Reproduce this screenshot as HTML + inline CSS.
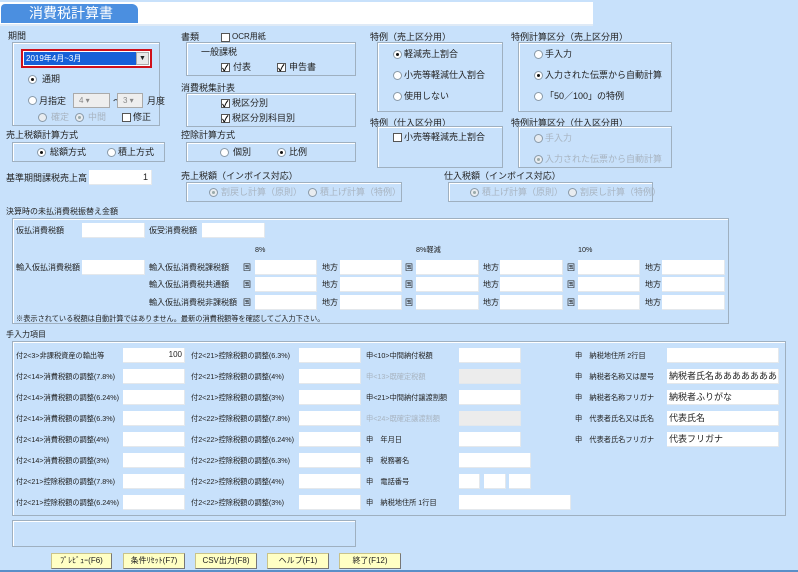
<!DOCTYPE html>
<html><head><meta charset="utf-8"><style>
*{margin:0;padding:0;box-sizing:border-box}
body{width:798px;height:572px;background:#c8e1fb;font-family:"Liberation Sans","Noto Sans CJK JP",sans-serif;font-size:9px;color:#222;position:relative;overflow:hidden}
div,span{position:absolute}
.t{white-space:nowrap;line-height:12px}
.g{color:#a8b4c0}
.bx{border:1px solid #9fb0c0;box-shadow:inset 1px 1px 0 #fff}
.in{background:#fff;height:15px;border-bottom:1px solid #e4e8ec;border-right:1px solid #e4e8ec}
.dis{background:#ececec}
.r{width:9px;height:9px;border-radius:50%;background:#fff;border:1px solid #8a9aa8}
.r.on::after{content:"";position:absolute;left:2px;top:2px;width:3px;height:3px;border-radius:50%;background:#111}
.r.gr{background:#e8ecf0}.r.gr.on::after{background:#9aa}
.c{width:9px;height:9px;background:#fff;border:1px solid #555}
.c.on::after{content:"✓";position:absolute;left:0;top:-3px;font-size:9px;font-weight:bold;color:#000}
.btn{height:16px;background:#ffffc4;border:1px solid #c9c38a;border-right-color:#777;border-bottom-color:#777;text-align:center;font-size:8px;line-height:14px}
.s{font-size:7.2px}
.m{font-size:8px}
</style></head><body>
<div style="left:0;top:2px;width:593px;height:24px;background:#fff;border-bottom:2px solid #dfeaf6"></div>
<div style="left:1px;top:4px;width:137px;height:19px;background:#4b8fe0;border-radius:4px 6px 0 0;color:#fff;font-size:14px;line-height:19px;padding-left:28px">消費税計算書</div>

<div class="t" style="left:8px;top:30px">期間</div>
<div class="bx" style="left:12px;top:42px;width:148px;height:84px"></div>
<div style="left:21px;top:49px;width:131px;height:19px;border:2px solid #d0101a;background:#fff"></div>
<div style="left:24px;top:52px;width:112px;height:13px;background:#1660d8;color:#fff;font-size:8px;line-height:13px;padding-left:2px">2019年4月~3月</div>
<div style="left:136px;top:52px;width:13px;height:13px;background:#e8e8e8;border:1px solid #aaa;font-size:7px;text-align:center;line-height:11px">▼</div>
<div class="r on" style="left:28px;top:75px"></div><div class="t" style="left:42px;top:73px">通期</div>
<div class="r" style="left:28px;top:96px"></div><div class="t" style="left:39px;top:95px">月指定</div>
<div style="left:73px;top:93px;width:37px;height:15px;background:#eee;border:1px solid #aaa;font-size:8px;color:#888;padding-left:5px;line-height:13px">4 ▾</div>
<div class="t" style="left:113px;top:95px">～</div>
<div style="left:117px;top:93px;width:26px;height:15px;background:#eee;border:1px solid #aaa;font-size:8px;color:#888;padding-left:5px;line-height:13px">3 ▾</div>
<div class="t" style="left:147px;top:95px">月度</div>
<div class="r gr" style="left:38px;top:113px"></div><div class="t g" style="left:51px;top:111px">確定</div>
<div class="r gr on" style="left:75px;top:113px"></div><div class="t g" style="left:88px;top:111px">中間</div>
<div class="c" style="left:122px;top:113px"></div><div class="t" style="left:133px;top:111px">修正</div>

<div class="t" style="left:6px;top:129px">売上税額計算方式</div>
<div class="bx" style="left:12px;top:142px;width:153px;height:20px"></div>
<div class="r on" style="left:37px;top:148px"></div><div class="t" style="left:50px;top:146px">総額方式</div>
<div class="r" style="left:107px;top:148px"></div><div class="t" style="left:118px;top:146px">積上方式</div>
<div class="t" style="left:6px;top:172px">基準期間課税売上高</div>
<div class="in" style="left:89px;top:170px;width:63px;text-align:right;padding-right:3px;line-height:15px">1</div>

<div class="t" style="left:181px;top:31px">書類</div>
<div class="c" style="left:221px;top:33px"></div><div class="t m" style="left:232px;top:31px">OCR用紙</div>
<div class="bx" style="left:186px;top:42px;width:170px;height:34px"></div>
<div class="t" style="left:201px;top:46px">一般課税</div>
<div class="c on" style="left:221px;top:63px"></div><div class="t" style="left:233px;top:61px">付表</div>
<div class="c on" style="left:277px;top:63px"></div><div class="t" style="left:289px;top:61px">申告書</div>
<div class="t" style="left:181px;top:82px">消費税集計表</div>
<div class="bx" style="left:186px;top:93px;width:170px;height:34px"></div>
<div class="c on" style="left:221px;top:99px"></div><div class="t" style="left:232px;top:97px">税区分別</div>
<div class="c on" style="left:221px;top:114px"></div><div class="t" style="left:232px;top:112px">税区分別科目別</div>
<div class="t" style="left:181px;top:129px">控除計算方式</div>
<div class="bx" style="left:186px;top:142px;width:170px;height:20px"></div>
<div class="r" style="left:220px;top:148px"></div><div class="t" style="left:233px;top:146px">個別</div>
<div class="r on" style="left:277px;top:148px"></div><div class="t" style="left:289px;top:146px">比例</div>
<div class="t" style="left:181px;top:170px">売上税額（インボイス対応）</div>
<div class="bx" style="left:186px;top:182px;width:216px;height:20px"></div>
<div class="r gr on" style="left:209px;top:188px"></div><div class="t g" style="left:221px;top:186px">割戻し計算（原則）</div>
<div class="r gr" style="left:308px;top:188px"></div><div class="t g" style="left:320px;top:186px">積上げ計算（特例）</div>

<div class="t" style="left:370px;top:31px">特例（売上区分用）</div>
<div class="bx" style="left:377px;top:42px;width:126px;height:70px"></div>
<div class="r on" style="left:393px;top:50px"></div><div class="t" style="left:404px;top:48px">軽減売上割合</div>
<div class="r" style="left:393px;top:71px"></div><div class="t" style="left:404px;top:69px">小売等軽減仕入割合</div>
<div class="r" style="left:393px;top:92px"></div><div class="t" style="left:404px;top:90px">使用しない</div>
<div class="t" style="left:370px;top:117px">特例（仕入区分用）</div>
<div class="bx" style="left:377px;top:126px;width:126px;height:42px"></div>
<div class="c" style="left:393px;top:133px"></div><div class="t" style="left:404px;top:131px">小売等軽減売上割合</div>
<div class="t" style="left:511px;top:31px">特例計算区分（売上区分用）</div>
<div class="bx" style="left:518px;top:42px;width:154px;height:70px"></div>
<div class="r" style="left:534px;top:50px"></div><div class="t" style="left:545px;top:48px">手入力</div>
<div class="r on" style="left:534px;top:71px"></div><div class="t" style="left:545px;top:69px">入力された伝票から自動計算</div>
<div class="r" style="left:534px;top:92px"></div><div class="t" style="left:545px;top:90px">「50／100」の特例</div>
<div class="t" style="left:511px;top:117px">特例計算区分（仕入区分用）</div>
<div class="bx" style="left:518px;top:126px;width:154px;height:42px"></div>
<div class="r gr" style="left:534px;top:134px"></div><div class="t g" style="left:545px;top:132px">手入力</div>
<div class="r gr on" style="left:534px;top:155px"></div><div class="t g" style="left:545px;top:153px">入力された伝票から自動計算</div>
<div class="t" style="left:444px;top:170px">仕入税額（インボイス対応）</div>
<div class="bx" style="left:448px;top:182px;width:205px;height:20px"></div>
<div class="r gr on" style="left:470px;top:188px"></div><div class="t g" style="left:482px;top:186px">積上げ計算（原則）</div>
<div class="r gr" style="left:568px;top:188px"></div><div class="t g" style="left:580px;top:186px">割戻し計算（特例）</div>

<div class="t m" style="left:6px;top:206px">決算時の未払消費税振替え金額</div>
<div class="bx" style="left:12px;top:218px;width:717px;height:106px"></div>
<div class="t m" style="left:16px;top:225px">仮払消費税額</div><div class="in" style="left:82px;top:223px;width:63px"></div>
<div class="t m" style="left:149px;top:225px">仮受消費税額</div><div class="in" style="left:202px;top:223px;width:63px"></div>
<div class="t s" style="left:255px;top:244px">8%</div>
<div class="t s" style="left:416px;top:244px">8%軽減</div>
<div class="t s" style="left:578px;top:244px">10%</div>
<div class="t m" style="left:16px;top:262px">輸入仮払消費税額</div><div class="in" style="left:82px;top:260px;width:63px"></div>
<div class="t m" style="left:149px;top:262px">輸入仮払消費税課税額</div>
<div class="t m" style="left:149px;top:279px">輸入仮払消費税共通額</div>
<div class="t m" style="left:149px;top:297px">輸入仮払消費税非課税額</div>
<div style="left:0;top:260px;width:798px;height:16px">
<span class="t m" style="left:243px;top:2px">国</span><span class="in" style="left:255px;width:62px"></span>
<span class="t m" style="left:322px;top:2px">地方</span><span class="in" style="left:340px;width:62px"></span>
<span class="t m" style="left:405px;top:2px">国</span><span class="in" style="left:416px;width:63px"></span>
<span class="t m" style="left:483px;top:2px">地方</span><span class="in" style="left:500px;width:63px"></span>
<span class="t m" style="left:567px;top:2px">国</span><span class="in" style="left:578px;width:62px"></span>
<span class="t m" style="left:645px;top:2px">地方</span><span class="in" style="left:662px;width:63px"></span></div>
<div style="left:0;top:277px;width:798px;height:16px">
<span class="t m" style="left:243px;top:2px">国</span><span class="in" style="left:255px;width:62px"></span>
<span class="t m" style="left:322px;top:2px">地方</span><span class="in" style="left:340px;width:62px"></span>
<span class="t m" style="left:405px;top:2px">国</span><span class="in" style="left:416px;width:63px"></span>
<span class="t m" style="left:483px;top:2px">地方</span><span class="in" style="left:500px;width:63px"></span>
<span class="t m" style="left:567px;top:2px">国</span><span class="in" style="left:578px;width:62px"></span>
<span class="t m" style="left:645px;top:2px">地方</span><span class="in" style="left:662px;width:63px"></span></div>
<div style="left:0;top:295px;width:798px;height:16px">
<span class="t m" style="left:243px;top:2px">国</span><span class="in" style="left:255px;width:62px"></span>
<span class="t m" style="left:322px;top:2px">地方</span><span class="in" style="left:340px;width:62px"></span>
<span class="t m" style="left:405px;top:2px">国</span><span class="in" style="left:416px;width:63px"></span>
<span class="t m" style="left:483px;top:2px">地方</span><span class="in" style="left:500px;width:63px"></span>
<span class="t m" style="left:567px;top:2px">国</span><span class="in" style="left:578px;width:62px"></span>
<span class="t m" style="left:645px;top:2px">地方</span><span class="in" style="left:662px;width:63px"></span></div>
<div class="t s" style="left:16px;top:313px">※表示されている税額は自動計算ではありません。最新の消費税額等を確認してご入力下さい。</div>

<div class="t m" style="left:6px;top:329px">手入力項目</div>
<div class="bx" style="left:12px;top:341px;width:774px;height:175px"></div>
<div class="t s" style="left:16px;top:350px">付2&lt;3&gt;非課税資産の輸出等</div><div class="in" style="left:123px;top:348px;width:62px;text-align:right;padding-right:2px;line-height:14px;font-size:8px">100</div>
<div class="t s" style="left:16px;top:371px">付2&lt;14&gt;消費税額の調整(7.8%)</div><div class="in" style="left:123px;top:369px;width:62px"></div>
<div class="t s" style="left:16px;top:392px">付2&lt;14&gt;消費税額の調整(6.24%)</div><div class="in" style="left:123px;top:390px;width:62px"></div>
<div class="t s" style="left:16px;top:413px">付2&lt;14&gt;消費税額の調整(6.3%)</div><div class="in" style="left:123px;top:411px;width:62px"></div>
<div class="t s" style="left:16px;top:434px">付2&lt;14&gt;消費税額の調整(4%)</div><div class="in" style="left:123px;top:432px;width:62px"></div>
<div class="t s" style="left:16px;top:455px">付2&lt;14&gt;消費税額の調整(3%)</div><div class="in" style="left:123px;top:453px;width:62px"></div>
<div class="t s" style="left:16px;top:476px">付2&lt;21&gt;控除税額の調整(7.8%)</div><div class="in" style="left:123px;top:474px;width:62px"></div>
<div class="t s" style="left:16px;top:497px">付2&lt;21&gt;控除税額の調整(6.24%)</div><div class="in" style="left:123px;top:495px;width:62px"></div>

<div class="t s" style="left:191px;top:350px">付2&lt;21&gt;控除税額の調整(6.3%)</div><div class="in" style="left:299px;top:348px;width:62px"></div>
<div class="t s" style="left:191px;top:371px">付2&lt;21&gt;控除税額の調整(4%)</div><div class="in" style="left:299px;top:369px;width:62px"></div>
<div class="t s" style="left:191px;top:392px">付2&lt;21&gt;控除税額の調整(3%)</div><div class="in" style="left:299px;top:390px;width:62px"></div>
<div class="t s" style="left:191px;top:413px">付2&lt;22&gt;控除税額の調整(7.8%)</div><div class="in" style="left:299px;top:411px;width:62px"></div>
<div class="t s" style="left:191px;top:434px">付2&lt;22&gt;控除税額の調整(6.24%)</div><div class="in" style="left:299px;top:432px;width:62px"></div>
<div class="t s" style="left:191px;top:455px">付2&lt;22&gt;控除税額の調整(6.3%)</div><div class="in" style="left:299px;top:453px;width:62px"></div>
<div class="t s" style="left:191px;top:476px">付2&lt;22&gt;控除税額の調整(4%)</div><div class="in" style="left:299px;top:474px;width:62px"></div>
<div class="t s" style="left:191px;top:497px">付2&lt;22&gt;控除税額の調整(3%)</div><div class="in" style="left:299px;top:495px;width:62px"></div>

<div class="t s" style="left:366px;top:350px">申&lt;10&gt;中間納付税額</div><div class="in" style="left:459px;top:348px;width:62px"></div>
<div class="t s g" style="left:366px;top:371px">申&lt;13&gt;既確定税額</div><div class="in dis" style="left:459px;top:369px;width:62px"></div>
<div class="t s" style="left:366px;top:392px">申&lt;21&gt;中間納付譲渡割額</div><div class="in" style="left:459px;top:390px;width:62px"></div>
<div class="t s g" style="left:366px;top:413px">申&lt;24&gt;既確定譲渡割額</div><div class="in dis" style="left:459px;top:411px;width:62px"></div>
<div class="t s" style="left:366px;top:434px">申　年月日</div><div class="in" style="left:459px;top:432px;width:62px"></div>
<div class="t s" style="left:366px;top:455px">申　税務署名</div><div class="in" style="left:459px;top:453px;width:72px"></div>
<div class="t s" style="left:366px;top:476px">申　電話番号</div><div class="in" style="left:459px;top:474px;width:21px"></div><div class="in" style="left:484px;top:474px;width:22px"></div><div class="in" style="left:509px;top:474px;width:22px"></div>
<div class="t s" style="left:366px;top:497px">申　納税地住所 1行目</div><div class="in" style="left:459px;top:495px;width:112px"></div>

<div class="t s" style="left:575px;top:350px">申　納税地住所 2行目</div><div class="in" style="left:667px;top:348px;width:112px"></div>
<div class="t s" style="left:575px;top:371px">申　納税者名称又は屋号</div><div class="in" style="left:667px;top:369px;width:112px;font-size:9px;line-height:14px;padding-left:2px;overflow:hidden;white-space:nowrap">納税者氏名ああああああああ</div>
<div class="t s" style="left:575px;top:392px">申　納税者名称フリガナ</div><div class="in" style="left:667px;top:390px;width:112px;font-size:9px;line-height:14px;padding-left:2px">納税者ふりがな</div>
<div class="t s" style="left:575px;top:413px">申　代表者氏名又は氏名</div><div class="in" style="left:667px;top:411px;width:112px;font-size:9px;line-height:14px;padding-left:2px">代表氏名</div>
<div class="t s" style="left:575px;top:434px">申　代表者氏名フリガナ</div><div class="in" style="left:667px;top:432px;width:112px;font-size:9px;line-height:14px;padding-left:2px">代表フリガナ</div>

<div class="bx" style="left:12px;top:520px;width:344px;height:27px"></div>
<div class="btn" style="left:51px;top:553px;width:61px">ﾌﾟﾚﾋﾞｭｰ(F6)</div>
<div class="btn" style="left:123px;top:553px;width:62px">条件ﾘｾｯﾄ(F7)</div>
<div class="btn" style="left:195px;top:553px;width:62px">CSV出力(F8)</div>
<div class="btn" style="left:267px;top:553px;width:62px">ヘルプ(F1)</div>
<div class="btn" style="left:339px;top:553px;width:62px">終了(F12)</div>
<div style="left:0;top:570px;width:798px;height:2px;background:#5a8fc8"></div>
</body></html>
